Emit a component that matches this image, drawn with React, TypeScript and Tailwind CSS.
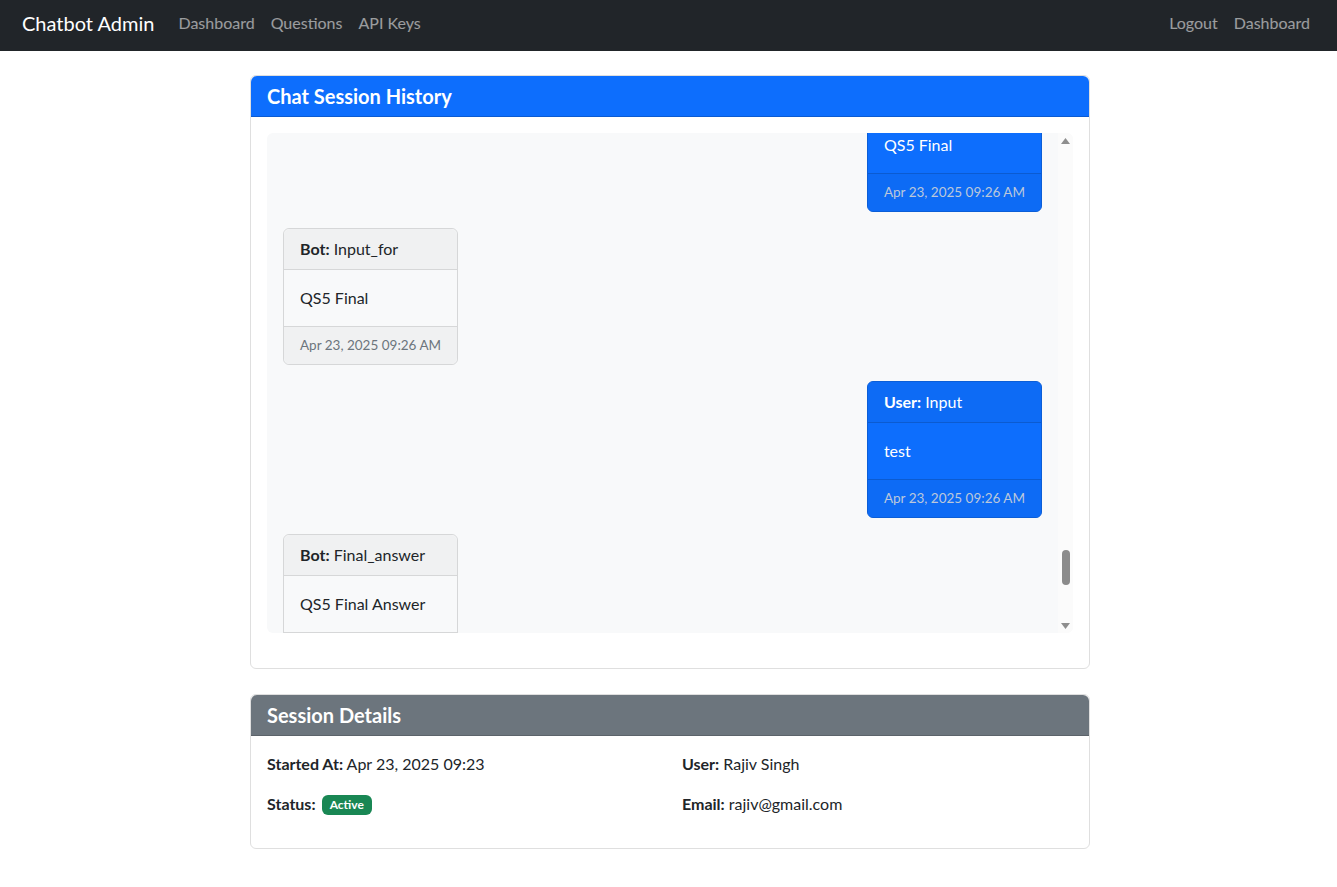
import { useLayoutEffect, useRef, useState } from "react";

type Msg = { from: "bot" | "user"; label: string; text: string; time: string };

// conversation log for the session, oldest first
const rounds = ["QS1", "QS2", "QS3", "QS4", "QS5"];
const minutes = ["09:23", "09:24", "09:24", "09:25", "09:26"];

const history: Msg[] = rounds.flatMap((qs, i) => {
  const time = `Apr 23, 2025 ${minutes[i]} AM`;
  const items: Msg[] = [
    { from: "bot", label: "Greeting", text: "Hi! How can I help?", time },
    { from: "user", label: "Input", text: "hi", time },
    { from: "bot", label: "Menu", text: "Select a question", time },
    { from: "user", label: "Option", text: qs, time },
    { from: "bot", label: "Question", text: `${qs} Question`, time },
    { from: "user", label: "Option", text: `${qs} Final`, time },
    { from: "bot", label: "Input_for", text: `${qs} Final`, time },
    { from: "user", label: "Input", text: "test", time },
    { from: "bot", label: "Final_answer", text: `${qs} Final Answer`, time },
  ];
  return items;
});

history.push(
  { from: "bot", label: "Menu", text: "Select a question", time: "Apr 23, 2025 09:26 AM" },
  { from: "user", label: "Input", text: "bye", time: "Apr 23, 2025 09:26 AM" },
  { from: "bot", label: "Goodbye", text: "Thank you!", time: "Apr 23, 2025 09:26 AM" }
);

const focusIndex = history.length - 6;
const TRACK = 470; // 500px box minus the two 15px arrow buttons

function MessageCard({ msg }: { msg: Msg }) {
  const isUser = msg.from === "user";
  return (
    <div className={isUser ? "flex justify-end mb-4" : "flex justify-start mb-4"}>
      <div
        className={
          isUser
            ? "max-w-[75%] rounded-md border border-[#0b5ed7] bg-[#0d6efd] text-white"
            : "max-w-[75%] rounded-md border border-[#d6d7d8] bg-[#f8f9fa] text-[#212529]"
        }
      >
        <div
          className={
            isUser
              ? "px-4 py-2 rounded-t-md bg-[#0d6bf5] border-b border-[#0b5bd1]"
              : "px-4 py-2 rounded-t-md bg-[#f0f1f2] border-b border-[#d6d7d8]"
          }
        >
          <strong className="font-bold">{isUser ? "User:" : "Bot:"}</strong> {msg.label}
        </div>
        <div className="p-4">{msg.text}</div>
        <div
          className={
            isUser
              ? "px-4 py-2 rounded-b-md bg-[#0d6bf5] border-t border-[#0b5bd1] text-[13.5px] leading-[21px] text-[#bcc8da]"
              : "px-4 py-2 rounded-b-md bg-[#f0f1f2] border-t border-[#d6d7d8] text-[13.5px] leading-[21px] text-[#6c757d]"
          }
        >
          {msg.time}
        </div>
      </div>
    </div>
  );
}

function Arrow({ down }: { down?: boolean }) {
  return (
    <div className="h-[15px] flex items-center justify-center">
      <svg width="9" height="6" viewBox="0 0 9 6" className="ml-[0.5px]">
        <path d={down ? "M0 0 L9 0 L4.5 6 Z" : "M4.5 0 L9 6 L0 6 Z"} fill="#8e8e8e" />
      </svg>
    </div>
  );
}

export default function App() {
  const boxRef = useRef<HTMLDivElement>(null);
  const focusRef = useRef<HTMLDivElement>(null);
  const [thumb, setThumb] = useState({ top: 0, height: TRACK });

  const measure = () => {
    const box = boxRef.current;
    if (!box) return;
    const height = Math.max(35, (box.clientHeight / box.scrollHeight) * TRACK);
    const range = box.scrollHeight - box.clientHeight;
    const top = range > 0 ? (box.scrollTop / range) * (TRACK - height) : 0;
    setThumb({ top, height });
  };

  // keep the log scrolled near the latest answers
  useLayoutEffect(() => {
    const box = boxRef.current;
    const item = focusRef.current;
    if (!box || !item) return;
    const delta = item.getBoundingClientRect().top - box.getBoundingClientRect().top;
    box.scrollTop += delta - 95;
    measure();
  }, []);

  return (
    <div className="min-h-screen bg-white text-[#212529] text-base leading-6 font-['Lato','Liberation_Sans',sans-serif]">
      <nav className="h-[51px] bg-[#212529] flex items-center justify-between pl-[22px] pr-[19px] pb-[5px]">
        <div className="flex items-center">
          <a href="#" className="text-white text-xl mr-4">
            Chatbot Admin
          </a>
          <a href="#" className="px-2 text-white/55">Dashboard</a>
          <a href="#" className="px-2 text-white/55">Questions</a>
          <a href="#" className="px-2 text-white/55">API Keys</a>
        </div>
        <div className="flex items-center">
          <a href="#" className="px-2 text-white/55">Logout</a>
          <a href="#" className="px-2 text-white/55">Dashboard</a>
        </div>
      </nav>

      <div className="flex justify-center pl-[3px]">
        <main className="w-[840px] pt-6 pb-10">
          <section className="rounded-md border border-[#dfdfdf]">
            <div className="bg-[#0d6efd] text-white px-4 py-2 rounded-t-md border-b border-[#0b5bd1]">
              <h5 className="text-xl font-bold leading-6">Chat Session History</h5>
            </div>
            <div className="px-4 pt-4 pb-[35px]">
              <div className="h-[500px] flex rounded-md bg-[#f8f9fa] overflow-hidden">
                <div
                  ref={boxRef}
                  onScroll={measure}
                  className="flex-1 overflow-y-auto p-4 [scrollbar-width:none] [&::-webkit-scrollbar]:hidden"
                >
                  {history.map((msg, i) => (
                    <div key={i} ref={i === focusIndex ? focusRef : undefined}>
                      <MessageCard msg={msg} />
                    </div>
                  ))}
                </div>
                <div className="w-[15px] bg-[#fbfbfb] flex flex-col">
                  <Arrow />
                  <div className="flex-1 flex justify-center">
                    <div
                      className="w-[8px] rounded-full bg-[#8b8b8b]"
                      style={{ marginTop: thumb.top, height: thumb.height }}
                    />
                  </div>
                  <Arrow down />
                </div>
              </div>
            </div>
          </section>

          <section className="mt-[25px] rounded-md border border-[#dfdfdf]">
            <div className="bg-[#6c757d] text-white px-4 py-2 rounded-t-md border-b border-[#5c636a]">
              <h5 className="text-xl font-bold leading-6">Session Details</h5>
            </div>
            <div className="px-4 pt-4 pb-8 grid grid-cols-2 gap-x-6 gap-y-4">
              <p>
                <strong className="font-bold">Started At:</strong> Apr 23, 2025 09:23
              </p>
              <p>
                <strong className="font-bold">User:</strong> Rajiv Singh
              </p>
              <p>
                <strong className="font-bold">Status:</strong>{" "}
                <span className="inline-block align-[1px] ml-[2px] rounded-md bg-[#198754] text-white text-xs font-bold leading-3 px-[8px] py-[4px]">
                  Active
                </span>
              </p>
              <p>
                <strong className="font-bold">Email:</strong> rajiv@gmail.com
              </p>
            </div>
          </section>
        </main>
      </div>
    </div>
  );
}
